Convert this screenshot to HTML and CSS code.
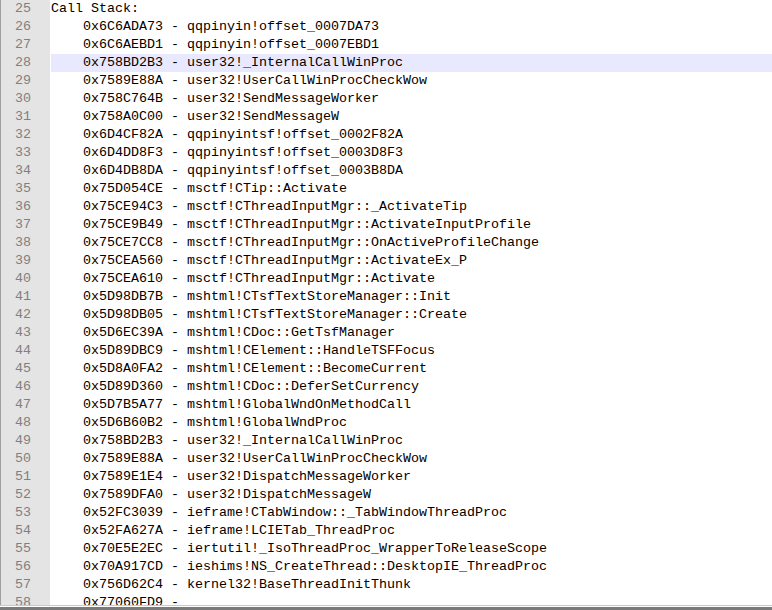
FILE: index.html
```html
<!DOCTYPE html>
<html>
<head>
    <meta charset="utf-8">
    <title>Call Stack</title>
    <link rel="stylesheet" href="styles.css">
</head>
<body>
    <div class="editor">
        <div class="line"><span class="num">25</span><span class="txt">Call Stack:</span></div>
        <div class="line"><span class="num">26</span><span class="txt">    0x6C6ADA73 - qqpinyin!offset_0007DA73</span></div>
        <div class="line"><span class="num">27</span><span class="txt">    0x6C6AEBD1 - qqpinyin!offset_0007EBD1</span></div>
        <div class="line current"><span class="num">28</span><span class="txt">    0x758BD2B3 - user32!_InternalCallWinProc</span></div>
        <div class="line"><span class="num">29</span><span class="txt">    0x7589E88A - user32!UserCallWinProcCheckWow</span></div>
        <div class="line"><span class="num">30</span><span class="txt">    0x758C764B - user32!SendMessageWorker</span></div>
        <div class="line"><span class="num">31</span><span class="txt">    0x758A0C00 - user32!SendMessageW</span></div>
        <div class="line"><span class="num">32</span><span class="txt">    0x6D4CF82A - qqpinyintsf!offset_0002F82A</span></div>
        <div class="line"><span class="num">33</span><span class="txt">    0x6D4DD8F3 - qqpinyintsf!offset_0003D8F3</span></div>
        <div class="line"><span class="num">34</span><span class="txt">    0x6D4DB8DA - qqpinyintsf!offset_0003B8DA</span></div>
        <div class="line"><span class="num">35</span><span class="txt">    0x75D054CE - msctf!CTip::Activate</span></div>
        <div class="line"><span class="num">36</span><span class="txt">    0x75CE94C3 - msctf!CThreadInputMgr::_ActivateTip</span></div>
        <div class="line"><span class="num">37</span><span class="txt">    0x75CE9B49 - msctf!CThreadInputMgr::ActivateInputProfile</span></div>
        <div class="line"><span class="num">38</span><span class="txt">    0x75CE7CC8 - msctf!CThreadInputMgr::OnActiveProfileChange</span></div>
        <div class="line"><span class="num">39</span><span class="txt">    0x75CEA560 - msctf!CThreadInputMgr::ActivateEx_P</span></div>
        <div class="line"><span class="num">40</span><span class="txt">    0x75CEA610 - msctf!CThreadInputMgr::Activate</span></div>
        <div class="line"><span class="num">41</span><span class="txt">    0x5D98DB7B - mshtml!CTsfTextStoreManager::Init</span></div>
        <div class="line"><span class="num">42</span><span class="txt">    0x5D98DB05 - mshtml!CTsfTextStoreManager::Create</span></div>
        <div class="line"><span class="num">43</span><span class="txt">    0x5D6EC39A - mshtml!CDoc::GetTsfManager</span></div>
        <div class="line"><span class="num">44</span><span class="txt">    0x5D89DBC9 - mshtml!CElement::HandleTSFFocus</span></div>
        <div class="line"><span class="num">45</span><span class="txt">    0x5D8A0FA2 - mshtml!CElement::BecomeCurrent</span></div>
        <div class="line"><span class="num">46</span><span class="txt">    0x5D89D360 - mshtml!CDoc::DeferSetCurrency</span></div>
        <div class="line"><span class="num">47</span><span class="txt">    0x5D7B5A77 - mshtml!GlobalWndOnMethodCall</span></div>
        <div class="line"><span class="num">48</span><span class="txt">    0x5D6B60B2 - mshtml!GlobalWndProc</span></div>
        <div class="line"><span class="num">49</span><span class="txt">    0x758BD2B3 - user32!_InternalCallWinProc</span></div>
        <div class="line"><span class="num">50</span><span class="txt">    0x7589E88A - user32!UserCallWinProcCheckWow</span></div>
        <div class="line"><span class="num">51</span><span class="txt">    0x7589E1E4 - user32!DispatchMessageWorker</span></div>
        <div class="line"><span class="num">52</span><span class="txt">    0x7589DFA0 - user32!DispatchMessageW</span></div>
        <div class="line"><span class="num">53</span><span class="txt">    0x52FC3039 - ieframe!CTabWindow::_TabWindowThreadProc</span></div>
        <div class="line"><span class="num">54</span><span class="txt">    0x52FA627A - ieframe!LCIETab_ThreadProc</span></div>
        <div class="line"><span class="num">55</span><span class="txt">    0x70E5E2EC - iertutil!_IsoThreadProc_WrapperToReleaseScope</span></div>
        <div class="line"><span class="num">56</span><span class="txt">    0x70A917CD - ieshims!NS_CreateThread::DesktopIE_ThreadProc</span></div>
        <div class="line"><span class="num">57</span><span class="txt">    0x756D62C4 - kernel32!BaseThreadInitThunk</span></div>
        <div class="line"><span class="num">58</span><span class="txt">    0x77060FD9 -</span></div>
    </div>
    <div class="hscroll"></div>
</body>
</html>
```

FILE: styles.css
```css
body {
    margin: 0;
    background-color: white;
    font-family: "Liberation Mono", "Courier New", monospace;
    font-size: 13.33px;
    overflow: hidden;
}

.editor {
    height: 605px;
    overflow: hidden;
}

.line {
    display: flex;
    height: 18px;
    line-height: 18px;
}

.num {
    box-sizing: border-box;
    width: 50px;
    flex: none;
    margin-right: 1px;
    padding-right: 19px;
    background-color: #e4e4e4;
    border-left: 1px solid #a0a0a0;
    color: #808080;
    text-align: right;
}

.txt {
    flex: 1;
    white-space: pre;
    color: black;
}

.current .txt {
    background-color: #e8e8ff;
}

.hscroll {
    height: 5px;
    border-top: 1px solid #c8c8c8;
    border-bottom: 3px solid #7a7a7a;
    box-sizing: border-box;
    height: 5px;
}
```
